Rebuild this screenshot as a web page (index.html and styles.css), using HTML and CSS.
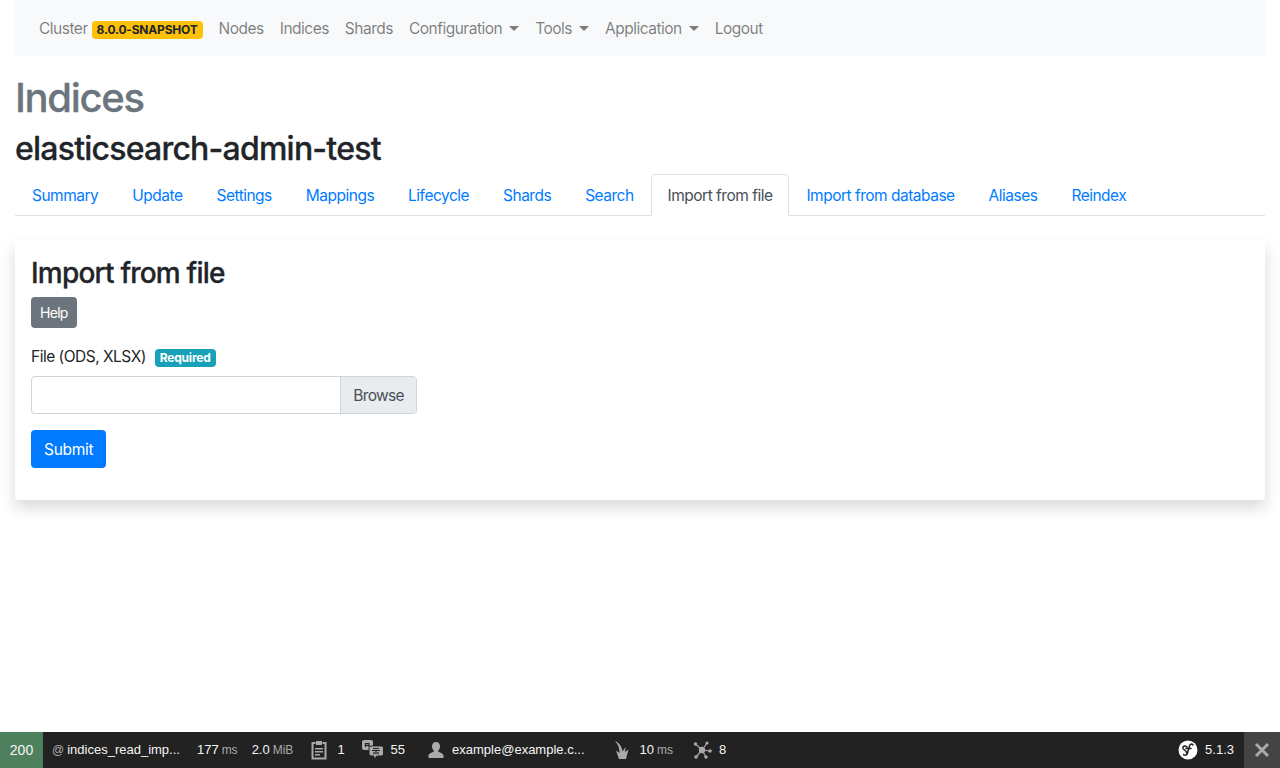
FILE: index.html
```html
<!DOCTYPE html>
<html lang="en">
<head>
    <meta charset="UTF-8">
    <meta name="viewport" content="width=device-width, initial-scale=1.0">
    <title>Indices</title>
    <link rel="stylesheet" href="styles.css">
</head>
<body>
    <div class="container">
        <nav class="navbar">
            <a class="nav-link" href="#">Cluster <span class="badge badge-warning">8.0.0-SNAPSHOT</span></a>
            <a class="nav-link" href="#">Nodes</a>
            <a class="nav-link" href="#">Indices</a>
            <a class="nav-link" href="#">Shards</a>
            <a class="nav-link caret" href="#">Configuration</a>
            <a class="nav-link caret" href="#">Tools</a>
            <a class="nav-link caret" href="#">Application</a>
            <a class="nav-link" href="#">Logout</a>
        </nav>

        <h1 class="page-title">Indices</h1>
        <h2 class="index-name">elasticsearch-admin-test</h2>

        <ul class="tabs">
            <li><a class="tab" href="#">Summary</a></li>
            <li><a class="tab" href="#">Update</a></li>
            <li><a class="tab" href="#">Settings</a></li>
            <li><a class="tab" href="#">Mappings</a></li>
            <li><a class="tab" href="#">Lifecycle</a></li>
            <li><a class="tab" href="#">Shards</a></li>
            <li><a class="tab" href="#">Search</a></li>
            <li><a class="tab active" href="#">Import from file</a></li>
            <li><a class="tab" href="#">Import from database</a></li>
            <li><a class="tab" href="#">Aliases</a></li>
            <li><a class="tab" href="#">Reindex</a></li>
        </ul>

        <section class="card">
            <h3 class="card-title">Import from file</h3>
            <a class="btn btn-help" href="#">Help</a>
            <form class="import-form">
                <div class="field-label">File (ODS, XLSX) <span class="badge badge-info">Required</span></div>
                <div class="file-input">
                    <div class="file-name"></div>
                    <div class="file-browse">Browse</div>
                </div>
                <button class="btn btn-submit" type="button">Submit</button>
            </form>
        </section>
    </div>

    <div class="toolbar">
        <div class="tb-status">200</div>
        <div class="tb-item tb-route"><span class="muted">@</span> <b>indices_read_imp...</b></div>
        <div class="tb-item tb-time"><b>177</b> <span class="muted">ms</span></div>
        <div class="tb-item tb-mem"><b>2.0</b> <span class="muted">MiB</span></div>
        <div class="tb-item tb-forms">
            <svg class="tb-icon" width="16" height="20" viewBox="0 0 16 20">
                <path fill="none" stroke="#aaa" stroke-width="2" d="M4.500 3H1.500v15.500h13V3h-3"/>
                <path fill="#aaa" d="M5 1h6v4H5zM4 8h8v1.600H4zM4 11h8v1.600H4zM4 14h5v1.600H4z"/>
            </svg>
            <b>1</b>
        </div>
        <div class="tb-item tb-trans">
            <svg class="tb-icon" width="22" height="20" viewBox="0 0 22 20">
                <rect fill="#aaa" x="0" y="0" width="11" height="10" rx="2"/>
                <path fill="none" stroke="#222" stroke-width="1.200" d="M3.500 7V3.500h3.500V7M3.500 5.300h3.500"/>
                <path fill="#aaa" stroke="#222" d="M9 6h10.500a2 2 0 0 1 2 2v6a2 2 0 0 1-2 2H15l-3 3.500V16H9a2 2 0 0 1-2-2V8a2 2 0 0 1 2-2z"/>
                <path fill="none" stroke="#222" stroke-width="1.200" d="M11 8.500h6M10 10.500h8M14 10.500v4M11.500 14l1-2M16.500 14l-1-2"/>
            </svg>
            <b>55</b>
        </div>
        <div class="tb-item tb-user">
            <svg class="tb-icon" width="16" height="18" viewBox="0 0 16 18">
                <path fill="#aaa" d="M8 1c2.600 0 4 2 4 4.400 0 1.700-.8 3.200-1.700 4.100v1.300c2 .8 5.200 1.900 5.200 3.700V17H.5v-2.500c0-1.800 3.200-2.900 5.200-3.700V9.500C4.800 8.600 4 7.100 4 5.400 4 3 5.400 1 8 1z"/>
            </svg>
            <b class="plain">example@example.c...</b>
        </div>
        <div class="tb-item tb-db">
            <svg class="tb-icon" width="16" height="20" viewBox="0 0 16 20">
                <path fill="#aaa" d="M1 1c4.500 2 7 6 7.500 10.500L11.500 7 11 12l3.500-2.500L12 19H5L2 10.500 5.500 13C5.500 8 4 4 1 1z"/>
            </svg>
            <b>10</b> <span class="muted">ms</span>
        </div>
        <div class="tb-item tb-graph">
            <svg class="tb-icon" width="20" height="20" viewBox="0 0 20 20">
                <path stroke="#aaa" stroke-width="1.200" d="M10 10L3.500 4M10 10l5-7M10 10l8 1M10 10l4 7M10 10l-6 7"/>
                <circle fill="#aaa" cx="10" cy="10" r="3.200"/>
                <circle fill="#aaa" cx="3.500" cy="4" r="1.800"/>
                <circle fill="#aaa" cx="15" cy="3" r="1.600"/>
                <circle fill="#aaa" cx="18" cy="11" r="1.800"/>
                <circle fill="#aaa" cx="14" cy="17" r="1.800"/>
                <circle fill="#aaa" cx="4" cy="17" r="1.800"/>
            </svg>
            <b>8</b>
        </div>
        <div class="tb-right">
            <svg class="tb-icon" width="20" height="20" viewBox="0 0 20 20">
                <circle fill="#fff" cx="10" cy="10" r="9.500"/>
                <path fill="none" stroke="#222" stroke-width="1.500" stroke-linecap="round" d="M15 5c-1-1.500-3-1-3.500 1L9.500 13c-.5 2.200-2.500 3-4 1.500M8 8.500h5M9 7C7 5 4 6.500 5 8.500c1 1.800 4 2 3.500 4.500"/>
            </svg>
            <b class="tb-version">5.1.3</b>
        </div>
        <div class="tb-close">
            <svg width="16" height="16" viewBox="0 0 16 16">
                <path stroke="#aaa" stroke-width="3" d="M2 2l12 12M14 2L2 14"/>
            </svg>
        </div>
    </div>
</body>
</html>
```

FILE: styles.css
```css
* {
    box-sizing: border-box;
}
body {
    margin: 0;
    font-family: Inter, "Open Sans", sans-serif;
    font-size: 15.5px;
    line-height: 24px;
    letter-spacing: -.5px;
    color: #212529;
    background-color: #fff;
}
a {
    text-decoration: none;
}
.container {
    padding: 0 15px;
}

.navbar {
    display: flex;
    align-items: center;
    height: 56px;
    padding: 8px 16px;
    background-color: #f8f9fa;
}
.nav-link {
    padding: 9px 8px 7px;
    color: rgba(0, 0, 0, .5);
    white-space: nowrap;
}
.caret::after {
    content: "";
    display: inline-block;
    margin-left: 7px;
    vertical-align: 3px;
    border-top: 5px solid;
    border-left: 5px solid transparent;
    border-right: 5px solid transparent;
}
.badge {
    display: inline-block;
    padding: 3px 5px;
    font-size: 12px;
    font-weight: 700;
    line-height: 1;
    letter-spacing: -.2px;
    border-radius: 4px;
    vertical-align: baseline;
}
.badge-warning {
    background-color: #ffc107;
    color: #212529;
}
.badge-info {
    background-color: #17a2b8;
    color: #fff;
    margin-left: 5px;
}

.page-title {
    margin: 18px 0 8px;
    font-size: 40px;
    font-weight: 500;
    line-height: 1.2;
    letter-spacing: -1.3px;
    -webkit-text-stroke: .3px;
    color: #6c757d;
}
.index-name {
    margin: 0 0 6px;
    font-size: 32px;
    font-weight: 500;
    line-height: 1.2;
    letter-spacing: -.78px;
    -webkit-text-stroke: .3px;
}

.tabs {
    display: flex;
    margin: 0 0 24px;
    padding: 0;
    list-style: none;
    border-bottom: 1px solid #dee2e6;
}
.tab {
    display: block;
    margin-bottom: -1px;
    padding: 9px 16px 7px;
    color: #007bff;
    border: 1px solid transparent;
    border-top-left-radius: 4px;
    border-top-right-radius: 4px;
}
.tab.active {
    color: #495057;
    background-color: #fff;
    border-color: #dee2e6 #dee2e6 #fff;
}

.card {
    height: 260px;
    margin-bottom: 48px;
    padding: 16px;
    border-radius: 4px;
    background-color: #fff;
    box-shadow: 0 8px 16px rgba(0, 0, 0, .15);
}
.card-title {
    margin: 1px 0 6px;
    font-size: 28px;
    font-weight: 500;
    line-height: 1.2;
    letter-spacing: -.8px;
    -webkit-text-stroke: .3px;
}
.btn {
    display: inline-block;
    color: #fff;
    border: 1px solid transparent;
    border-radius: 4px;
    font-family: inherit;
    letter-spacing: inherit;
}
.btn-help {
    padding: 4px 8px;
    font-size: 14px;
    line-height: 21px;
    letter-spacing: -.7px;
    background-color: #6c757d;
}
.import-form {
    margin-top: 17px;
}
.field-label {
    margin-bottom: 7px;
}
.file-input {
    display: flex;
    width: 386px;
    height: 38px;
    margin-bottom: 16px;
    border: 1px solid #ced4da;
    border-radius: 4px;
}
.file-name {
    flex: 1;
}
.file-browse {
    padding: 7px 12px 5px;
    color: #495057;
    letter-spacing: -.65px;
    background-color: #e9ecef;
    border-left: 1px solid #ced4da;
    border-top-right-radius: 3px;
    border-bottom-right-radius: 3px;
}
.btn-submit {
    padding: 7px 12px 5px;
    font-size: 15.5px;
    line-height: 24px;
    letter-spacing: -.3px;
    background-color: #007bff;
}

.toolbar {
    position: fixed;
    left: 0;
    right: 0;
    bottom: 0;
    display: flex;
    align-items: center;
    height: 36px;
    font-family: "Liberation Sans", Arial, sans-serif;
    font-size: 12px;
    letter-spacing: 0;
    color: #f5f5f5;
    background-color: #222;
}
.toolbar b {
    font-weight: 400;
    font-size: 13px;
}
.muted {
    color: #aaa;
}
.tb-status {
    width: 43px;
    height: 36px;
    font-size: 14px;
    line-height: 36px;
    text-align: center;
    background-color: #4f805d;
}
.tb-item {
    display: flex;
    align-items: center;
    gap: 3px;
    white-space: nowrap;
}
.tb-route {
    margin-left: 9px;
}
.tb-time {
    margin-left: 17px;
}
.tb-mem {
    margin-left: 14px;
}
.tb-forms {
    margin-left: 18px;
    gap: 10px;
}
.tb-trans {
    margin-left: 17px;
    gap: 7px;
}
.tb-user {
    margin-left: 23px;
    gap: 8px;
}
.tb-db {
    margin-left: 29px;
    gap: 3px;
}
.tb-db .tb-icon {
    margin-right: 7px;
}
.tb-graph {
    margin-left: 19px;
    gap: 7px;
}
.tb-right {
    display: flex;
    align-items: center;
    gap: 7px;
    margin-left: auto;
    padding-right: 10px;
}
.tb-close {
    display: flex;
    align-items: center;
    justify-content: center;
    width: 36px;
    height: 36px;
    background-color: #444;
}
```
